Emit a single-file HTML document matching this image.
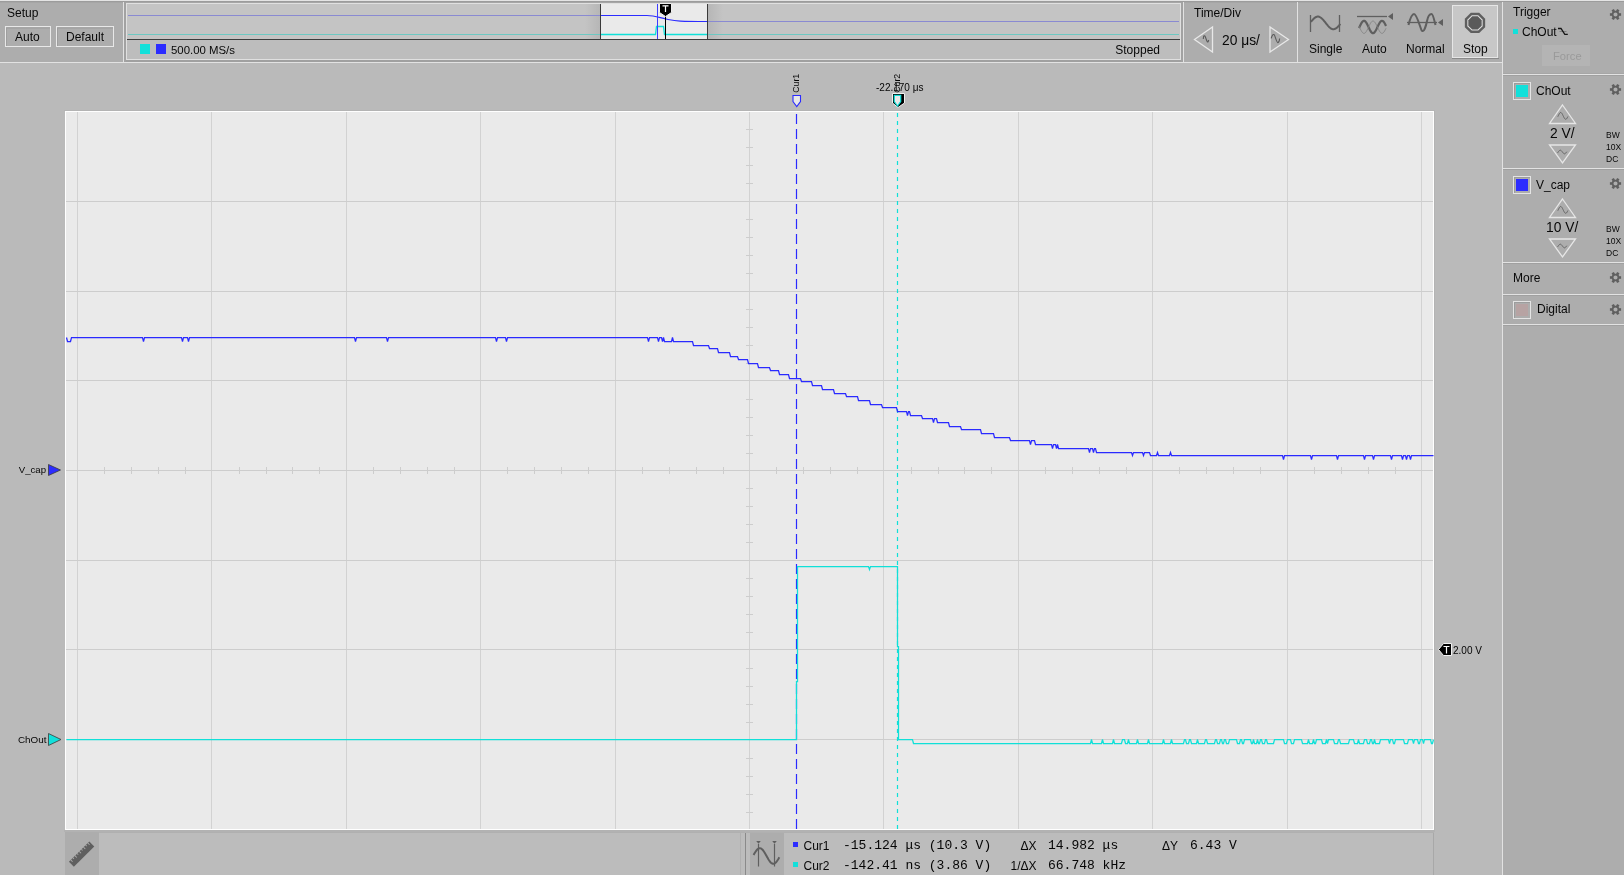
<!DOCTYPE html>
<html><head><meta charset="utf-8"><title>Scope</title>
<style>html,body{margin:0;padding:0;width:1624px;height:875px;overflow:hidden;background:#bababa}svg{display:block;will-change:transform}text{white-space:pre}</style>
</head><body>
<svg width="1624" height="875" viewBox="0 0 1624 875">
<rect x="0" y="0" width="1624" height="875" fill="#bababa" />
<rect x="0" y="0" width="1502" height="62" fill="#adadad" />
<rect x="0" y="0" width="1624" height="1" fill="#e4e4e4" />
<rect x="0" y="1" width="1624" height="1" fill="#9c9c9c" />
<rect x="0" y="2" width="1502" height="1" fill="#a6a6a6" />
<rect x="0" y="62" width="1502" height="1" fill="#e2e2e2" />
<rect x="123" y="2" width="1" height="60" fill="#e2e2e2" />
<rect x="124" y="2" width="1" height="60" fill="#a2a2a2" />
<rect x="125" y="2" width="1" height="60" fill="#a2a2a2" />
<rect x="1181" y="2" width="1" height="60" fill="#a2a2a2" />
<rect x="1182" y="2" width="1" height="60" fill="#a2a2a2" />
<rect x="1183" y="2" width="1" height="60" fill="#e2e2e2" />
<rect x="1297" y="2" width="1" height="60" fill="#e2e2e2" />
<text x="7" y="17" font-family="Liberation Sans" font-size="12" fill="#080808" text-anchor="start" >Setup</text>
<rect x="5.5" y="26.5" width="45" height="20" fill="none" stroke="#e8e8e8" stroke-width="1"/>
<path d="M6.5 46.0V28.0H50.0" fill="none" stroke="#9e9e9e" stroke-width="1"/>
<text x="15" y="41.1" font-family="Liberation Sans" font-size="12" fill="#080808" text-anchor="start" >Auto</text>
<rect x="56.5" y="26.5" width="57" height="20" fill="none" stroke="#e8e8e8" stroke-width="1"/>
<path d="M57.5 46.0V28.0H113.0" fill="none" stroke="#9e9e9e" stroke-width="1"/>
<text x="66" y="41.1" font-family="Liberation Sans" font-size="12" fill="#080808" text-anchor="start" >Default</text>
<rect x="126" y="3" width="1055" height="57" fill="#e0e0e0" />
<rect x="127" y="4" width="1053" height="35" fill="#c4c4c4" />
<rect x="127" y="40" width="1053" height="19" fill="#bdbdbd" />
<rect x="127" y="39" width="1053" height="1" fill="#3c3c3c" />
<rect x="126" y="60" width="1055" height="1" fill="#a0a0a0" />
<rect x="126" y="61" width="1055" height="1" fill="#a0a0a0" />
<rect x="601" y="4" width="106" height="35" fill="#eaeaea" />
<rect x="600" y="4" width="1" height="35" fill="#3a3a3a" />
<rect x="707" y="4" width="1" height="35" fill="#3a3a3a" />
<defs><linearGradient id="gl" x1="0" x2="1"><stop offset="0" stop-color="#c4c4c4"/><stop offset="1" stop-color="#b6b6b6"/></linearGradient><linearGradient id="gr" x1="0" x2="1"><stop offset="0" stop-color="#b6b6b6"/><stop offset="1" stop-color="#c4c4c4"/></linearGradient></defs>
<rect x="585" y="4" width="15" height="35" fill="url(#gl)" />
<rect x="708" y="4" width="15" height="35" fill="url(#gr)" />
<rect x="128" y="15" width="472" height="1" fill="#8a8ad2" />
<path d="M601 15.5H647C655 15.5 660 18 668 19.5C676 21 680 21.5 707 21.5" fill="none" stroke="#2c2cff" stroke-width="1.2"/>
<rect x="708" y="21" width="471" height="1" fill="#8a8ad2" />
<rect x="128" y="34" width="472" height="1" fill="#6ec8c2" />
<path d="M601 34.5H655.5L656.5 26.5H663.5L664.5 34.5H707" fill="none" stroke="#10e0d8" stroke-width="1.3"/>
<rect x="708" y="34" width="471" height="1" fill="#6ec8c2" />
<rect x="657" y="4" width="1" height="35" fill="#3c3cff" />
<rect x="665" y="16" width="1" height="23" fill="#000000" />
<path d="M659.5 3.5H671.5V12.5L665.5 16.5L659.5 12.5Z" fill="#000" stroke="#f0f0f0" stroke-width="1"/>
<path d="M662.5 5.8H668.5M665.5 5.8V12" stroke="#fff" stroke-width="1.2" fill="none"/>
<rect x="140" y="44" width="10" height="10" fill="#12e0da" />
<rect x="156" y="44" width="10" height="10" fill="#2c2cff" />
<text x="171" y="53.6" font-family="Liberation Sans" font-size="11.4" fill="#080808" text-anchor="start" >500.00 MS/s</text>
<text x="1160" y="54" font-family="Liberation Sans" font-size="12" fill="#080808" text-anchor="end" >Stopped</text>
<text x="1194" y="17" font-family="Liberation Sans" font-size="12" fill="#080808" text-anchor="start" >Time/Div</text>
<path d="M1194.5 39.5L1212.5 27V52Z" fill="none" stroke="#e8e8e8" stroke-width="1.3"/>
<path d="M1288.5 39.5L1270 27V52Z" fill="none" stroke="#e8e8e8" stroke-width="1.3"/>
<path d="M1203.3 39C1203.4 35.5 1204.5 34.5 1205.6 37.5S1207.5 44.5 1208.7 40" fill="none" stroke="#5a5a5a" stroke-width="1.1"/>
<path d="M1271.2 38.4C1272 35 1273 34.2 1274 34.6S1276.5 42.8 1277.8 42.6S1279.5 40 1279.6 38.5" fill="none" stroke="#5a5a5a" stroke-width="1.1"/>
<text x="1222" y="44.6" font-family="Liberation Sans" font-size="13.8" fill="#080808" text-anchor="start" >20 μs/</text>
<path d="M1310.5 15V32M1339.5 15V32" stroke="#5f5f5f" stroke-width="1.3" fill="none"/>
<path d="M1311.00 21.82 L1311.73 20.91 L1312.46 20.05 L1313.20 19.25 L1313.93 18.53 L1314.66 17.91 L1315.39 17.39 L1316.13 17.00 L1316.86 16.74 L1317.59 16.61 L1318.33 16.62 L1319.06 16.77 L1319.79 17.06 L1320.52 17.47 L1321.25 18.00 L1321.99 18.64 L1322.72 19.37 L1323.45 20.19 L1324.18 21.06 L1324.92 21.97 L1325.65 22.90 L1326.38 23.83 L1327.12 24.74 L1327.85 25.61 L1328.58 26.43 L1329.31 27.16 L1330.05 27.80 L1330.78 28.33 L1331.51 28.74 L1332.24 29.03 L1332.97 29.18 L1333.71 29.19 L1334.44 29.06 L1335.17 28.80 L1335.90 28.41 L1336.64 27.89 L1337.37 27.27 L1338.10 26.55 L1338.84 25.75 L1339.57 24.89 L1340.30 23.98" stroke="#5f5f5f" stroke-width="2" fill="none"/>
<text x="1309" y="53" font-family="Liberation Sans" font-size="12" fill="#080808" text-anchor="start" >Single</text>
<path d="M1357 16.5H1387" stroke="#5f5f5f" stroke-width="1.3"/><path d="M1388 16.5L1393 13V20Z" fill="#5f5f5f"/>
<path d="M1359.00 28.08 L1359.67 26.62 L1360.35 25.19 L1361.03 23.85 L1361.70 22.69 L1362.38 21.77 L1363.05 21.14 L1363.72 20.83 L1364.40 20.86 L1365.08 21.23 L1365.75 21.92 L1366.42 22.89 L1367.10 24.09 L1367.78 25.45 L1368.45 26.89 L1369.12 28.34 L1369.80 29.72 L1370.47 30.94 L1371.15 31.95 L1371.83 32.69 L1372.50 33.11 L1373.17 33.19 L1373.85 32.93 L1374.53 32.34 L1375.20 31.46 L1375.88 30.33 L1376.55 29.02 L1377.22 27.59 L1377.90 26.14 L1378.58 24.73 L1379.25 23.44 L1379.92 22.36 L1380.60 21.53 L1381.28 21.00 L1381.95 20.80 L1382.62 20.95 L1383.30 21.43 L1383.97 22.22 L1384.65 23.27 L1385.33 24.53 L1386.00 25.92" stroke="#5f5f5f" stroke-width="2.2" fill="none"/>
<path d="M1359.00 26.12 L1359.67 27.58 L1360.35 29.01 L1361.03 30.35 L1361.70 31.51 L1362.38 32.43 L1363.05 33.06 L1363.72 33.37 L1364.40 33.34 L1365.08 32.97 L1365.75 32.28 L1366.42 31.31 L1367.10 30.11 L1367.78 28.75 L1368.45 27.31 L1369.12 25.86 L1369.80 24.48 L1370.47 23.26 L1371.15 22.25 L1371.83 21.51 L1372.50 21.09 L1373.17 21.01 L1373.85 21.27 L1374.53 21.86 L1375.20 22.74 L1375.88 23.87 L1376.55 25.18 L1377.22 26.61 L1377.90 28.06 L1378.58 29.47 L1379.25 30.76 L1379.92 31.84 L1380.60 32.67 L1381.28 33.20 L1381.95 33.40 L1382.62 33.25 L1383.30 32.77 L1383.97 31.98 L1384.65 30.93 L1385.33 29.67 L1386.00 28.28" stroke="#808080" stroke-width="0.8" fill="none"/>
<text x="1362" y="53" font-family="Liberation Sans" font-size="12" fill="#080808" text-anchor="start" >Auto</text>
<path d="M1407 22.5H1437" stroke="#5f5f5f" stroke-width="1.3"/><path d="M1438 22.5L1443 19V26Z" fill="#5f5f5f"/>
<path d="M1408.5 25C1410 19 1412 14 1414 14S1418 20 1420 26S1422 31 1423 31S1426 26 1427 21S1430 14 1431.5 14S1434 19 1435.5 25" stroke="#5f5f5f" stroke-width="2" fill="none"/>
<text x="1406" y="53" font-family="Liberation Sans" font-size="12" fill="#080808" text-anchor="start" >Normal</text>
<rect x="1452" y="5" width="46" height="53" fill="#c7c7c7" />
<rect x="1452.5" y="5.5" width="45" height="52" fill="none" stroke="#e6e6e6" stroke-width="1"/>
<rect x="1452" y="58" width="47" height="1" fill="#8a8a8a" />
<polygon points="1485.16,27.16 1479.21,33.11 1470.79,33.11 1464.84,27.16 1464.84,18.74 1470.79,12.79 1479.21,12.79 1485.16,18.74" fill="#5f5f5f"/>
<polygon points="1482.67,26.13 1478.18,30.62 1471.82,30.62 1467.33,26.13 1467.33,19.77 1471.82,15.28 1478.18,15.28 1482.67,19.77" fill="#e2e2e2"/>
<polygon points="1481.65,25.71 1477.76,29.60 1472.24,29.60 1468.35,25.71 1468.35,20.19 1472.24,16.30 1477.76,16.30 1481.65,20.19" fill="#5a5a5a"/>
<text x="1463" y="53" font-family="Liberation Sans" font-size="12" fill="#080808" text-anchor="start" >Stop</text>
<rect x="1503" y="2" width="121" height="873" fill="#adadad" />
<rect x="1502" y="2" width="1" height="873" fill="#e2e2e2" />
<text x="1513" y="16" font-family="Liberation Sans" font-size="12" fill="#080808" text-anchor="start" >Trigger</text>
<rect x="1614.20" y="8.90" width="2.6" height="3" fill="#5f5f5f" transform="rotate(30 1615.5 14.5)"/>
<rect x="1614.20" y="8.90" width="2.6" height="3" fill="#5f5f5f" transform="rotate(90 1615.5 14.5)"/>
<rect x="1614.20" y="8.90" width="2.6" height="3" fill="#5f5f5f" transform="rotate(150 1615.5 14.5)"/>
<rect x="1614.20" y="8.90" width="2.6" height="3" fill="#5f5f5f" transform="rotate(210 1615.5 14.5)"/>
<rect x="1614.20" y="8.90" width="2.6" height="3" fill="#5f5f5f" transform="rotate(270 1615.5 14.5)"/>
<rect x="1614.20" y="8.90" width="2.6" height="3" fill="#5f5f5f" transform="rotate(330 1615.5 14.5)"/>
<circle cx="1615.5" cy="14.5" r="2.9" fill="none" stroke="#5f5f5f" stroke-width="1.7"/>
<rect x="1513" y="29" width="5" height="5" fill="#12e0da" />
<text x="1522" y="36" font-family="Liberation Sans" font-size="12" fill="#080808" text-anchor="start" >ChOut</text>
<path d="M1559.5 31.5H1566.5" stroke="#7a7a7a" stroke-width="0.9" fill="none"/><path d="M1558 28.5H1561L1564.8 34.3H1567.8" stroke="#141414" stroke-width="1.3" fill="none"/>
<rect x="1542" y="45" width="48" height="21" fill="#b4b4b4" />
<text x="1553" y="60" font-family="Liberation Sans" font-size="11.2" fill="#9a9a9a" text-anchor="start" >Force</text>
<rect x="1503" y="74" width="121" height="1" fill="#e2e2e2" />
<rect x="1503" y="75" width="121" height="1" fill="#a0a0a0" />
<rect x="1503" y="73" width="121" height="1" fill="#a6a6a6" />
<rect x="1513.5" y="82.5" width="17" height="17" fill="none" stroke="#e4e4e4" stroke-width="1"/>
<rect x="1514" y="83" width="16" height="1" fill="#9c9c9c" />
<rect x="1514" y="83" width="1" height="16" fill="#9c9c9c" />
<rect x="1516" y="85" width="12" height="12" fill="#12e0da" />
<text x="1536" y="95" font-family="Liberation Sans" font-size="12" fill="#080808" text-anchor="start" >ChOut</text>
<rect x="1614.20" y="83.90" width="2.6" height="3" fill="#5f5f5f" transform="rotate(30 1615.5 89.5)"/>
<rect x="1614.20" y="83.90" width="2.6" height="3" fill="#5f5f5f" transform="rotate(90 1615.5 89.5)"/>
<rect x="1614.20" y="83.90" width="2.6" height="3" fill="#5f5f5f" transform="rotate(150 1615.5 89.5)"/>
<rect x="1614.20" y="83.90" width="2.6" height="3" fill="#5f5f5f" transform="rotate(210 1615.5 89.5)"/>
<rect x="1614.20" y="83.90" width="2.6" height="3" fill="#5f5f5f" transform="rotate(270 1615.5 89.5)"/>
<rect x="1614.20" y="83.90" width="2.6" height="3" fill="#5f5f5f" transform="rotate(330 1615.5 89.5)"/>
<circle cx="1615.5" cy="89.5" r="2.9" fill="none" stroke="#5f5f5f" stroke-width="1.7"/>
<path d="M1562.5 105L1575.5 123.5H1549.5Z" fill="none" stroke="#e6e6e6" stroke-width="1.3"/>
<path d="M1557.80 116.75 L1558.05 116.21 L1558.31 115.68 L1558.56 115.14 L1558.81 114.63 L1559.06 114.15 L1559.32 113.71 L1559.57 113.33 L1559.82 113.01 L1560.07 112.76 L1560.33 112.59 L1560.58 112.51 L1560.83 112.51 L1561.08 112.60 L1561.34 112.77 L1561.59 113.02 L1561.84 113.34 L1562.09 113.72 L1562.35 114.16 L1562.60 114.64 L1562.85 115.16 L1563.10 115.69 L1563.36 116.23 L1563.61 116.76 L1563.86 117.27 L1564.11 117.74 L1564.37 118.17 L1564.62 118.54 L1564.87 118.85 L1565.12 119.08 L1565.38 119.23 L1565.63 119.30 L1565.88 119.28 L1566.13 119.18 L1566.38 118.99 L1566.64 118.73 L1566.89 118.39 L1567.14 118.00 L1567.39 117.55 L1567.65 117.06 L1567.90 116.54" fill="none" stroke="#5a5a5a" stroke-width="0.9"/>
<text x="1550" y="137.6" font-family="Liberation Sans" font-size="13.8" fill="#080808" text-anchor="start" >2 V/</text>
<path d="M1549.5 145H1575.5L1562.5 163Z" fill="none" stroke="#e6e6e6" stroke-width="1.3"/>
<path d="M1557.40 153.01 L1557.63 152.74 L1557.87 152.44 L1558.11 152.13 L1558.34 151.81 L1558.58 151.50 L1558.81 151.21 L1559.05 150.94 L1559.28 150.70 L1559.52 150.50 L1559.75 150.35 L1559.99 150.25 L1560.22 150.20 L1560.46 150.21 L1560.69 150.28 L1560.92 150.39 L1561.16 150.56 L1561.39 150.77 L1561.63 151.02 L1561.87 151.30 L1562.10 151.60 L1562.34 151.91 L1562.57 152.23 L1562.81 152.54 L1563.04 152.83 L1563.28 153.10 L1563.51 153.33 L1563.74 153.52 L1563.98 153.67 L1564.21 153.76 L1564.45 153.80 L1564.68 153.78 L1564.92 153.71 L1565.15 153.59 L1565.39 153.42 L1565.62 153.20 L1565.86 152.95 L1566.10 152.66 L1566.33 152.36 L1566.57 152.05 L1566.80 151.73" fill="none" stroke="#5a5a5a" stroke-width="0.9"/>
<text x="1606" y="137.5" font-family="Liberation Sans" font-size="8.5" fill="#080808" text-anchor="start" >BW</text>
<text x="1606" y="149.5" font-family="Liberation Sans" font-size="8.5" fill="#080808" text-anchor="start" >10X</text>
<text x="1606" y="161.5" font-family="Liberation Sans" font-size="8.5" fill="#080808" text-anchor="start" >DC</text>
<rect x="1503" y="168" width="121" height="1" fill="#e2e2e2" />
<rect x="1503" y="169" width="121" height="1" fill="#a0a0a0" />
<rect x="1513.5" y="176.5" width="17" height="17" fill="none" stroke="#e4e4e4" stroke-width="1"/>
<rect x="1514" y="177" width="16" height="1" fill="#9c9c9c" />
<rect x="1514" y="177" width="1" height="16" fill="#9c9c9c" />
<rect x="1516" y="179" width="12" height="12" fill="#2c2cff" />
<text x="1536" y="189" font-family="Liberation Sans" font-size="12" fill="#080808" text-anchor="start" >V_cap</text>
<rect x="1614.20" y="177.90" width="2.6" height="3" fill="#5f5f5f" transform="rotate(30 1615.5 183.5)"/>
<rect x="1614.20" y="177.90" width="2.6" height="3" fill="#5f5f5f" transform="rotate(90 1615.5 183.5)"/>
<rect x="1614.20" y="177.90" width="2.6" height="3" fill="#5f5f5f" transform="rotate(150 1615.5 183.5)"/>
<rect x="1614.20" y="177.90" width="2.6" height="3" fill="#5f5f5f" transform="rotate(210 1615.5 183.5)"/>
<rect x="1614.20" y="177.90" width="2.6" height="3" fill="#5f5f5f" transform="rotate(270 1615.5 183.5)"/>
<rect x="1614.20" y="177.90" width="2.6" height="3" fill="#5f5f5f" transform="rotate(330 1615.5 183.5)"/>
<circle cx="1615.5" cy="183.5" r="2.9" fill="none" stroke="#5f5f5f" stroke-width="1.7"/>
<path d="M1562.5 199L1575.5 217.5H1549.5Z" fill="none" stroke="#e6e6e6" stroke-width="1.3"/>
<path d="M1557.80 210.75 L1558.05 210.21 L1558.31 209.68 L1558.56 209.14 L1558.81 208.63 L1559.06 208.15 L1559.32 207.71 L1559.57 207.33 L1559.82 207.01 L1560.07 206.76 L1560.33 206.59 L1560.58 206.51 L1560.83 206.51 L1561.08 206.60 L1561.34 206.77 L1561.59 207.02 L1561.84 207.34 L1562.09 207.72 L1562.35 208.16 L1562.60 208.64 L1562.85 209.16 L1563.10 209.69 L1563.36 210.23 L1563.61 210.76 L1563.86 211.27 L1564.11 211.74 L1564.37 212.17 L1564.62 212.54 L1564.87 212.85 L1565.12 213.08 L1565.38 213.23 L1565.63 213.30 L1565.88 213.28 L1566.13 213.18 L1566.38 212.99 L1566.64 212.73 L1566.89 212.39 L1567.14 212.00 L1567.39 211.55 L1567.65 211.06 L1567.90 210.54" fill="none" stroke="#5a5a5a" stroke-width="0.9"/>
<text x="1546" y="231.6" font-family="Liberation Sans" font-size="13.8" fill="#080808" text-anchor="start" >10 V/</text>
<path d="M1549.5 239H1575.5L1562.5 257Z" fill="none" stroke="#e6e6e6" stroke-width="1.3"/>
<path d="M1557.40 247.01 L1557.63 246.74 L1557.87 246.44 L1558.11 246.13 L1558.34 245.81 L1558.58 245.50 L1558.81 245.21 L1559.05 244.94 L1559.28 244.70 L1559.52 244.50 L1559.75 244.35 L1559.99 244.25 L1560.22 244.20 L1560.46 244.21 L1560.69 244.28 L1560.92 244.39 L1561.16 244.56 L1561.39 244.77 L1561.63 245.02 L1561.87 245.30 L1562.10 245.60 L1562.34 245.91 L1562.57 246.23 L1562.81 246.54 L1563.04 246.83 L1563.28 247.10 L1563.51 247.33 L1563.74 247.52 L1563.98 247.67 L1564.21 247.76 L1564.45 247.80 L1564.68 247.78 L1564.92 247.71 L1565.15 247.59 L1565.39 247.42 L1565.62 247.20 L1565.86 246.95 L1566.10 246.66 L1566.33 246.36 L1566.57 246.05 L1566.80 245.73" fill="none" stroke="#5a5a5a" stroke-width="0.9"/>
<text x="1606" y="231.5" font-family="Liberation Sans" font-size="8.5" fill="#080808" text-anchor="start" >BW</text>
<text x="1606" y="243.5" font-family="Liberation Sans" font-size="8.5" fill="#080808" text-anchor="start" >10X</text>
<text x="1606" y="255.5" font-family="Liberation Sans" font-size="8.5" fill="#080808" text-anchor="start" >DC</text>
<rect x="1503" y="262" width="121" height="1" fill="#e2e2e2" />
<rect x="1503" y="263" width="121" height="1" fill="#a0a0a0" />
<text x="1513" y="282" font-family="Liberation Sans" font-size="12" fill="#080808" text-anchor="start" >More</text>
<rect x="1614.20" y="271.90" width="2.6" height="3" fill="#5f5f5f" transform="rotate(30 1615.5 277.5)"/>
<rect x="1614.20" y="271.90" width="2.6" height="3" fill="#5f5f5f" transform="rotate(90 1615.5 277.5)"/>
<rect x="1614.20" y="271.90" width="2.6" height="3" fill="#5f5f5f" transform="rotate(150 1615.5 277.5)"/>
<rect x="1614.20" y="271.90" width="2.6" height="3" fill="#5f5f5f" transform="rotate(210 1615.5 277.5)"/>
<rect x="1614.20" y="271.90" width="2.6" height="3" fill="#5f5f5f" transform="rotate(270 1615.5 277.5)"/>
<rect x="1614.20" y="271.90" width="2.6" height="3" fill="#5f5f5f" transform="rotate(330 1615.5 277.5)"/>
<circle cx="1615.5" cy="277.5" r="2.9" fill="none" stroke="#5f5f5f" stroke-width="1.7"/>
<rect x="1503" y="294" width="121" height="1" fill="#e2e2e2" />
<rect x="1503" y="295" width="121" height="1" fill="#a0a0a0" />
<rect x="1513.5" y="301.5" width="17" height="17" fill="none" stroke="#e4e4e4" stroke-width="1"/>
<rect x="1514" y="302" width="16" height="1" fill="#9c9c9c" />
<rect x="1514" y="302" width="1" height="16" fill="#9c9c9c" />
<rect x="1516" y="304" width="12" height="12" fill="#b7a3a3" />
<text x="1537" y="313" font-family="Liberation Sans" font-size="12" fill="#080808" text-anchor="start" >Digital</text>
<rect x="1614.20" y="303.90" width="2.6" height="3" fill="#5f5f5f" transform="rotate(30 1615.5 309.5)"/>
<rect x="1614.20" y="303.90" width="2.6" height="3" fill="#5f5f5f" transform="rotate(90 1615.5 309.5)"/>
<rect x="1614.20" y="303.90" width="2.6" height="3" fill="#5f5f5f" transform="rotate(150 1615.5 309.5)"/>
<rect x="1614.20" y="303.90" width="2.6" height="3" fill="#5f5f5f" transform="rotate(210 1615.5 309.5)"/>
<rect x="1614.20" y="303.90" width="2.6" height="3" fill="#5f5f5f" transform="rotate(270 1615.5 309.5)"/>
<rect x="1614.20" y="303.90" width="2.6" height="3" fill="#5f5f5f" transform="rotate(330 1615.5 309.5)"/>
<circle cx="1615.5" cy="309.5" r="2.9" fill="none" stroke="#5f5f5f" stroke-width="1.7"/>
<rect x="1503" y="324" width="121" height="1" fill="#e2e2e2" />
<rect x="1503" y="325" width="121" height="1" fill="#a0a0a0" />
<rect x="64" y="110" width="1371" height="1" fill="#b4b4b4" />
<rect x="1434" y="110" width="1" height="721" fill="#b4b4b4" />
<rect x="65" y="111" width="1369" height="719" fill="#ffffff" />
<rect x="66" y="112" width="1367" height="717" fill="#eaeaea" />
<rect x="77" y="112" width="1" height="717" fill="#d2d2d2" />
<rect x="211" y="112" width="1" height="717" fill="#d2d2d2" />
<rect x="346" y="112" width="1" height="717" fill="#d2d2d2" />
<rect x="480" y="112" width="1" height="717" fill="#d2d2d2" />
<rect x="615" y="112" width="1" height="717" fill="#d2d2d2" />
<rect x="749" y="112" width="1" height="717" fill="#d2d2d2" />
<rect x="883" y="112" width="1" height="717" fill="#d2d2d2" />
<rect x="1018" y="112" width="1" height="717" fill="#d2d2d2" />
<rect x="1152" y="112" width="1" height="717" fill="#d2d2d2" />
<rect x="1287" y="112" width="1" height="717" fill="#d2d2d2" />
<rect x="1421" y="112" width="1" height="717" fill="#d2d2d2" />
<rect x="66" y="201" width="1367" height="1" fill="#cdcdcd" />
<rect x="66" y="291" width="1367" height="1" fill="#cdcdcd" />
<rect x="66" y="380" width="1367" height="1" fill="#cdcdcd" />
<rect x="66" y="470" width="1367" height="1" fill="#cdcdcd" />
<rect x="66" y="560" width="1367" height="1" fill="#cdcdcd" />
<rect x="66" y="649" width="1367" height="1" fill="#cdcdcd" />
<rect x="66" y="739" width="1367" height="1" fill="#cdcdcd" />
<rect x="104" y="467" width="1" height="7" fill="#cdcdcd" />
<rect x="131" y="467" width="1" height="7" fill="#cdcdcd" />
<rect x="158" y="467" width="1" height="7" fill="#cdcdcd" />
<rect x="185" y="467" width="1" height="7" fill="#cdcdcd" />
<rect x="239" y="467" width="1" height="7" fill="#cdcdcd" />
<rect x="266" y="467" width="1" height="7" fill="#cdcdcd" />
<rect x="292" y="467" width="1" height="7" fill="#cdcdcd" />
<rect x="319" y="467" width="1" height="7" fill="#cdcdcd" />
<rect x="373" y="467" width="1" height="7" fill="#cdcdcd" />
<rect x="400" y="467" width="1" height="7" fill="#cdcdcd" />
<rect x="427" y="467" width="1" height="7" fill="#cdcdcd" />
<rect x="454" y="467" width="1" height="7" fill="#cdcdcd" />
<rect x="507" y="467" width="1" height="7" fill="#cdcdcd" />
<rect x="534" y="467" width="1" height="7" fill="#cdcdcd" />
<rect x="561" y="467" width="1" height="7" fill="#cdcdcd" />
<rect x="588" y="467" width="1" height="7" fill="#cdcdcd" />
<rect x="642" y="467" width="1" height="7" fill="#cdcdcd" />
<rect x="669" y="467" width="1" height="7" fill="#cdcdcd" />
<rect x="696" y="467" width="1" height="7" fill="#cdcdcd" />
<rect x="723" y="467" width="1" height="7" fill="#cdcdcd" />
<rect x="776" y="467" width="1" height="7" fill="#cdcdcd" />
<rect x="803" y="467" width="1" height="7" fill="#cdcdcd" />
<rect x="830" y="467" width="1" height="7" fill="#cdcdcd" />
<rect x="857" y="467" width="1" height="7" fill="#cdcdcd" />
<rect x="911" y="467" width="1" height="7" fill="#cdcdcd" />
<rect x="938" y="467" width="1" height="7" fill="#cdcdcd" />
<rect x="964" y="467" width="1" height="7" fill="#cdcdcd" />
<rect x="991" y="467" width="1" height="7" fill="#cdcdcd" />
<rect x="1045" y="467" width="1" height="7" fill="#cdcdcd" />
<rect x="1072" y="467" width="1" height="7" fill="#cdcdcd" />
<rect x="1099" y="467" width="1" height="7" fill="#cdcdcd" />
<rect x="1126" y="467" width="1" height="7" fill="#cdcdcd" />
<rect x="1179" y="467" width="1" height="7" fill="#cdcdcd" />
<rect x="1206" y="467" width="1" height="7" fill="#cdcdcd" />
<rect x="1233" y="467" width="1" height="7" fill="#cdcdcd" />
<rect x="1260" y="467" width="1" height="7" fill="#cdcdcd" />
<rect x="1314" y="467" width="1" height="7" fill="#cdcdcd" />
<rect x="1341" y="467" width="1" height="7" fill="#cdcdcd" />
<rect x="1368" y="467" width="1" height="7" fill="#cdcdcd" />
<rect x="1395" y="467" width="1" height="7" fill="#cdcdcd" />
<rect x="746" y="129" width="7" height="1" fill="#cdcdcd" />
<rect x="746" y="147" width="7" height="1" fill="#cdcdcd" />
<rect x="746" y="165" width="7" height="1" fill="#cdcdcd" />
<rect x="746" y="183" width="7" height="1" fill="#cdcdcd" />
<rect x="746" y="219" width="7" height="1" fill="#cdcdcd" />
<rect x="746" y="237" width="7" height="1" fill="#cdcdcd" />
<rect x="746" y="255" width="7" height="1" fill="#cdcdcd" />
<rect x="746" y="273" width="7" height="1" fill="#cdcdcd" />
<rect x="746" y="309" width="7" height="1" fill="#cdcdcd" />
<rect x="746" y="327" width="7" height="1" fill="#cdcdcd" />
<rect x="746" y="345" width="7" height="1" fill="#cdcdcd" />
<rect x="746" y="363" width="7" height="1" fill="#cdcdcd" />
<rect x="746" y="399" width="7" height="1" fill="#cdcdcd" />
<rect x="746" y="417" width="7" height="1" fill="#cdcdcd" />
<rect x="746" y="435" width="7" height="1" fill="#cdcdcd" />
<rect x="746" y="453" width="7" height="1" fill="#cdcdcd" />
<rect x="746" y="488" width="7" height="1" fill="#cdcdcd" />
<rect x="746" y="506" width="7" height="1" fill="#cdcdcd" />
<rect x="746" y="524" width="7" height="1" fill="#cdcdcd" />
<rect x="746" y="542" width="7" height="1" fill="#cdcdcd" />
<rect x="746" y="578" width="7" height="1" fill="#cdcdcd" />
<rect x="746" y="596" width="7" height="1" fill="#cdcdcd" />
<rect x="746" y="614" width="7" height="1" fill="#cdcdcd" />
<rect x="746" y="632" width="7" height="1" fill="#cdcdcd" />
<rect x="746" y="668" width="7" height="1" fill="#cdcdcd" />
<rect x="746" y="686" width="7" height="1" fill="#cdcdcd" />
<rect x="746" y="704" width="7" height="1" fill="#cdcdcd" />
<rect x="746" y="722" width="7" height="1" fill="#cdcdcd" />
<rect x="746" y="758" width="7" height="1" fill="#cdcdcd" />
<rect x="746" y="776" width="7" height="1" fill="#cdcdcd" />
<rect x="746" y="794" width="7" height="1" fill="#cdcdcd" />
<rect x="746" y="812" width="7" height="1" fill="#cdcdcd" />
<rect x="64" y="830" width="1371" height="1" fill="#b2b2b2" />
<rect x="64" y="831" width="1371" height="1" fill="#b2b2b2" />
<line x1="796.5" y1="114" x2="796.5" y2="829" stroke="#2a2aff" stroke-width="1.2" stroke-dasharray="10 5"/>
<line x1="897.5" y1="113" x2="897.5" y2="829" stroke="#10e0d8" stroke-width="1.2" stroke-dasharray="4 4"/>
<path d="M66.5 337.5 L67.5 341.5 L70.5 341.5 L71.5 337.5 L142.5 337.5 L143.5 341.5 L144.5 337.5 L181.5 337.5 L182.5 341.5 L183.5 337.5 L187.5 337.5 L188.5 341.5 L189.5 337.5 L354.5 337.5 L355.5 341.5 L356.5 337.5 L386.5 337.5 L387.5 341.5 L388.5 337.5 L495.5 337.5 L496.5 341.5 L497.5 337.5 L505.5 337.5 L506.5 341.5 L507.5 337.5 L647.5 337.5 L648.5 341.5 L649.5 337.5 L657.5 337.5 L658.5 341.5 L659.5 337.5 L661.5 337.5 L662.5 341.5 L663.5 337.5 L663.5 337.5 L664.5 341.5 L671.5 341.5 L672.5 337.5 L673.5 341.5 L692.5 341.5 L693.5 345.5 L708.5 345.5 L709.5 348.5 L717.5 348.5 L718.5 352.5 L729.5 352.5 L730.5 356.5 L737.5 356.5 L738.5 359.5 L747.5 359.5 L748.5 363.5 L757.5 363.5 L758.5 367.5 L769.5 367.5 L770.5 370.5 L778.5 370.5 L779.5 374.5 L788.5 374.5 L789.5 378.5 L800.5 378.5 L801.5 381.5 L811.5 381.5 L812.5 385.5 L821.5 385.5 L822.5 389.5 L833.5 389.5 L834.5 393.5 L845.5 393.5 L846.5 396.5 L857.5 396.5 L858.5 400.5 L869.5 400.5 L870.5 404.5 L881.5 404.5 L882.5 407.5 L896.5 407.5 L897.5 411.5 L906.5 411.5 L907.5 415.5 L908.5 411.5 L909.5 411.5 L910.5 415.5 L921.5 415.5 L922.5 418.5 L932.5 418.5 L933.5 422.5 L934.5 418.5 L936.5 418.5 L937.5 422.5 L948.5 422.5 L949.5 426.5 L960.5 426.5 L961.5 429.5 L980.5 429.5 L981.5 433.5 L993.5 433.5 L994.5 437.5 L1009.5 437.5 L1010.5 440.5 L1029.5 440.5 L1030.5 444.5 L1031.5 440.5 L1034.5 440.5 L1035.5 444.5 L1051.5 444.5 L1052.5 448.5 L1053.5 444.5 L1055.5 444.5 L1056.5 448.5 L1057.5 444.5 L1057.5 444.5 L1058.5 448.5 L1088.5 448.5 L1089.5 452.5 L1090.5 448.5 L1092.5 448.5 L1093.5 452.5 L1094.5 448.5 L1095.5 448.5 L1096.5 452.5 L1131.5 452.5 L1132.5 455.5 L1133.5 452.5 L1142.5 452.5 L1143.5 455.5 L1144.5 452.5 L1149.5 452.5 L1150.5 455.5 L1156.5 455.5 L1157.5 452.5 L1158.5 455.5 L1169.5 455.5 L1170.5 452.5 L1171.5 455.5 L1282.5 455.5 L1283.5 459.5 L1284.5 455.5 L1310.5 455.5 L1311.5 459.5 L1312.5 455.5 L1336.5 455.5 L1337.5 459.5 L1338.5 455.5 L1363.5 455.5 L1364.5 459.5 L1365.5 455.5 L1372.5 455.5 L1373.5 459.5 L1374.5 455.5 L1390.5 455.5 L1391.5 459.5 L1392.5 455.5 L1401.5 455.5 L1402.5 459.5 L1403.5 455.5 L1405.5 455.5 L1406.5 459.5 L1407.5 455.5 L1409.5 455.5 L1410.5 459.5 L1411.5 455.5 L1433.5 455.5" fill="none" stroke="#2a2aff" stroke-width="1.25" stroke-linejoin="miter"/>
<path d="M66.5 739.5 L796.5 739.5 L796.5 681.5 L797.5 681.5 L797.5 566.5 L868.5 566.5 L869.5 569.5 L870.5 566.5 L897.5 566.5 L897.5 646.5 L898.5 646.5 L898.5 739.5 L912.5 739.5 L913.5 743.5 L1090.5 743.5 L1091.5 739.5 L1091.5 739.5 L1092.5 743.5 L1101.5 743.5 L1102.5 739.5 L1102.5 739.5 L1103.5 743.5 L1112.5 743.5 L1113.5 739.5 L1113.5 739.5 L1114.5 743.5 L1121.5 743.5 L1122.5 739.5 L1124.5 739.5 L1125.5 743.5 L1127.5 743.5 L1128.5 739.5 L1128.5 739.5 L1129.5 743.5 L1136.5 743.5 L1137.5 739.5 L1137.5 739.5 L1138.5 743.5 L1147.5 743.5 L1148.5 739.5 L1148.5 739.5 L1149.5 743.5 L1162.5 743.5 L1163.5 739.5 L1163.5 739.5 L1164.5 743.5 L1170.5 743.5 L1171.5 739.5 L1171.5 739.5 L1172.5 743.5 L1183.5 743.5 L1184.5 739.5 L1185.5 739.5 L1186.5 743.5 L1188.5 743.5 L1189.5 739.5 L1190.5 739.5 L1191.5 743.5 L1196.5 743.5 L1197.5 739.5 L1197.5 739.5 L1198.5 743.5 L1204.5 743.5 L1205.5 739.5 L1206.5 739.5 L1207.5 743.5 L1214.5 743.5 L1215.5 739.5 L1216.5 739.5 L1217.5 743.5 L1219.5 743.5 L1220.5 739.5 L1221.5 739.5 L1222.5 743.5 L1223.5 743.5 L1224.5 739.5 L1225.5 739.5 L1226.5 743.5 L1228.5 743.5 L1229.5 739.5 L1236.5 739.5 L1237.5 743.5 L1239.5 743.5 L1240.5 739.5 L1241.5 739.5 L1242.5 743.5 L1243.5 743.5 L1244.5 739.5 L1250.5 739.5 L1251.5 743.5 L1252.5 743.5 L1253.5 739.5 L1253.5 739.5 L1254.5 743.5 L1256.5 743.5 L1257.5 739.5 L1257.5 739.5 L1258.5 743.5 L1259.5 743.5 L1260.5 739.5 L1261.5 739.5 L1262.5 743.5 L1264.5 743.5 L1265.5 739.5 L1266.5 739.5 L1267.5 743.5 L1273.5 743.5 L1274.5 739.5 L1283.5 739.5 L1284.5 743.5 L1286.5 743.5 L1287.5 739.5 L1290.5 739.5 L1291.5 743.5 L1293.5 743.5 L1294.5 739.5 L1301.5 739.5 L1302.5 743.5 L1307.5 743.5 L1308.5 739.5 L1308.5 739.5 L1309.5 743.5 L1312.5 743.5 L1313.5 739.5 L1313.5 739.5 L1314.5 743.5 L1315.5 743.5 L1316.5 739.5 L1321.5 739.5 L1322.5 743.5 L1325.5 743.5 L1326.5 739.5 L1326.5 739.5 L1327.5 743.5 L1327.5 743.5 L1328.5 739.5 L1333.5 739.5 L1334.5 743.5 L1337.5 743.5 L1338.5 739.5 L1339.5 739.5 L1340.5 743.5 L1348.5 743.5 L1349.5 739.5 L1353.5 739.5 L1354.5 743.5 L1357.5 743.5 L1358.5 739.5 L1358.5 739.5 L1359.5 743.5 L1363.5 743.5 L1364.5 739.5 L1366.5 739.5 L1367.5 743.5 L1369.5 743.5 L1370.5 739.5 L1371.5 739.5 L1372.5 743.5 L1373.5 743.5 L1374.5 739.5 L1374.5 739.5 L1375.5 743.5 L1379.5 743.5 L1380.5 739.5 L1388.5 739.5 L1389.5 743.5 L1389.5 743.5 L1390.5 739.5 L1392.5 739.5 L1393.5 743.5 L1394.5 743.5 L1395.5 739.5 L1403.5 739.5 L1404.5 743.5 L1407.5 743.5 L1408.5 739.5 L1412.5 739.5 L1413.5 743.5 L1413.5 743.5 L1414.5 739.5 L1417.5 739.5 L1418.5 743.5 L1419.5 743.5 L1420.5 739.5 L1422.5 739.5 L1423.5 743.5 L1423.5 743.5 L1424.5 739.5 L1430.5 739.5 L1431.5 743.5 L1432.5 743.5 L1433.5 739.5 L1433.5 739.5" fill="none" stroke="#10e0d8" stroke-width="1.25"/>
<path d="M48.5 464.5V475.5L60.5 470Z" fill="#2c2cff" stroke="#3a3a3a" stroke-width="0.8"/>
<text x="46" y="472.6" font-family="Liberation Sans" font-size="9.6" fill="#050505" text-anchor="end" >V_cap</text>
<path d="M48.5 733.5V745.5L61 739.5Z" fill="#12e0da" stroke="#3a3a3a" stroke-width="0.8"/>
<text x="46.5" y="742.6" font-family="Liberation Sans" font-size="9.9" fill="#050505" text-anchor="end" >ChOut</text>
<path d="M1438.5 649.5L1443.5 643.5H1451.5V655.5H1443.5Z" fill="#000" stroke="#f2f2f2" stroke-width="1"/>
<path d="M1443.5 646.5H1449.5M1446.5 646.5V653.5" stroke="#fff" stroke-width="1.2" fill="none"/>
<text x="1453" y="654" font-family="Liberation Sans" font-size="10" fill="#050505" text-anchor="start" >2.00 V</text>
<path d="M793 95.5H800.5V101.5L796.75 106.5L793 101.5Z" fill="#e8e8e8" stroke="#2a2aff" stroke-width="1.1"/>
<text x="0" y="0" font-family="Liberation Sans" font-size="8.8" fill="#050505" text-anchor="start" transform="translate(799.3 92.8) rotate(-90)">Cur1</text>
<text x="0" y="0" font-family="Liberation Sans" font-size="8.8" fill="#050505" text-anchor="start" transform="translate(900.3 92.8) rotate(-90)">Cur2</text>
<text x="876" y="91" font-family="Liberation Sans" font-size="10" fill="#050505" text-anchor="start" >-22.170 μs</text>
<path d="M892.5 93.5H904.5V103L898 107.5L892.5 103Z" fill="#000" stroke="#f0f0f0" stroke-width="1"/>
<path d="M894.3 95.3H900.7V101.5L897.5 106L894.3 101.5Z" fill="#e8e8e8" stroke="#10e0d8" stroke-width="1.2"/>
<rect x="65" y="832" width="1369" height="43" fill="#bcbcbc" />
<rect x="65" y="832" width="1369" height="1" fill="#b0b0b0" />
<rect x="65" y="832" width="34" height="43" fill="#adadad" />
<g transform="translate(81.6 854.1) rotate(-45)"><rect x="-14.4" y="-3.5" width="28.8" height="7" fill="#5f5f5f"/><rect x="-12.20" y="-3.6" width="0.9" height="2.6" fill="#adadad"/><rect x="-9.20" y="-3.6" width="0.9" height="1.6" fill="#adadad"/><rect x="-6.20" y="-3.6" width="0.9" height="2.6" fill="#adadad"/><rect x="-3.20" y="-3.6" width="0.9" height="1.6" fill="#adadad"/><rect x="-0.20" y="-3.6" width="0.9" height="2.6" fill="#adadad"/><rect x="2.80" y="-3.6" width="0.9" height="1.6" fill="#adadad"/><rect x="5.80" y="-3.6" width="0.9" height="2.6" fill="#adadad"/><rect x="8.80" y="-3.6" width="0.9" height="1.6" fill="#adadad"/><rect x="11.80" y="-3.6" width="0.9" height="2.6" fill="#adadad"/></g>
<rect x="740" y="833" width="1" height="42" fill="#b0b0b0" />
<rect x="745" y="833" width="1" height="42" fill="#8a8a8a" />
<rect x="750" y="833" width="34" height="42" fill="#adadad" />
<path d="M758.5 844V866.5M774.5 844V866.5" stroke="#5f5f5f" stroke-width="1.2"/>
<path d="M756.2 841H760.8L758.5 843.8Z M772.2 841H776.8L774.5 843.8Z" fill="#5f5f5f"/>
<path d="M753.60 855.00 L754.24 853.86 L754.88 852.77 L755.53 851.75 L756.17 850.82 L756.81 850.01 L757.46 849.33 L758.10 848.80 L758.74 848.44 L759.38 848.24 L760.02 848.21 L760.67 848.36 L761.31 848.68 L761.95 849.16 L762.60 849.79 L763.24 850.57 L763.88 851.46 L764.52 852.45 L765.16 853.53 L765.81 854.66 L766.45 855.82 L767.09 856.98 L767.74 858.12 L768.38 859.22 L769.02 860.24 L769.66 861.17 L770.30 861.98 L770.95 862.66 L771.59 863.19 L772.23 863.56 L772.88 863.76 L773.52 863.79 L774.16 863.64 L774.80 863.33 L775.44 862.85 L776.09 862.22 L776.73 861.44 L777.37 860.55 L778.01 859.56 L778.66 858.48 L779.30 857.35" stroke="#5f5f5f" stroke-width="2" fill="none"/>
<rect x="793" y="842" width="5" height="5" fill="#2c2cff" />
<rect x="793" y="862" width="5" height="5" fill="#12e0da" />
<text x="829.5" y="849.5" font-family="Liberation Sans" font-size="12" fill="#080808" text-anchor="end" >Cur1</text>
<text x="829.5" y="869.5" font-family="Liberation Sans" font-size="12" fill="#080808" text-anchor="end" >Cur2</text>
<text x="843" y="848.6" font-family="Liberation Mono" font-size="13" fill="#050505" text-anchor="start" >-15.124 μs (10.3 V)</text>
<text x="843" y="868.6" font-family="Liberation Mono" font-size="13" fill="#050505" text-anchor="start" >-142.41 ns (3.86 V)</text>
<text x="1036.5" y="849.5" font-family="Liberation Sans" font-size="12" fill="#080808" text-anchor="end" >ΔX</text>
<text x="1036.5" y="869.5" font-family="Liberation Sans" font-size="12" fill="#080808" text-anchor="end" >1/ΔX</text>
<text x="1048" y="848.6" font-family="Liberation Mono" font-size="13" fill="#050505" text-anchor="start" >14.982 μs</text>
<text x="1048" y="868.6" font-family="Liberation Mono" font-size="13" fill="#050505" text-anchor="start" >66.748 kHz</text>
<text x="1178" y="849.5" font-family="Liberation Sans" font-size="12" fill="#080808" text-anchor="end" >ΔY</text>
<text x="1190" y="848.6" font-family="Liberation Mono" font-size="13" fill="#050505" text-anchor="start" >6.43 V</text>
<rect x="1433" y="833" width="1" height="42" fill="#a8a8a8" />
</svg>
</body></html>
